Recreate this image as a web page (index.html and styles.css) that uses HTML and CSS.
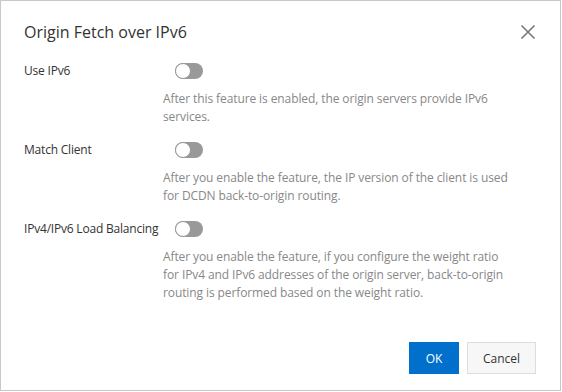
FILE: index.html
```html
<!DOCTYPE html>
<html>
<head>
<meta charset="utf-8">
<link rel="stylesheet" href="styles.css">
</head>
<body>
<div class="dialog">
  <div class="header">
    <div class="title">Origin Fetch over IPv6</div>
    <svg class="close" width="16" height="16" viewBox="0 0 16 16"><path d="M1.5 1.5L14.5 14.5M14.5 1.5L1.5 14.5" stroke="#777" stroke-width="1.6" fill="none"/></svg>
  </div>
  <div class="rows">
    <div class="row">
      <div class="label">Use IPv6</div>
      <div class="field">
        <div class="switch"><span class="knob"></span></div>
        <div class="desc">After this feature is enabled, the origin servers provide IPv6 services.</div>
      </div>
    </div>
    <div class="row">
      <div class="label">Match Client</div>
      <div class="field">
        <div class="switch"><span class="knob"></span></div>
        <div class="desc">After you enable the feature, the IP version of the client is used for DCDN back-to-origin routing.</div>
      </div>
    </div>
    <div class="row">
      <div class="label">IPv4/IPv6 Load Balancing</div>
      <div class="field">
        <div class="switch"><span class="knob"></span></div>
        <div class="desc">After you enable the feature, if you configure the weight ratio for IPv4 and IPv6 addresses of the origin server, back-to-origin routing is performed based on the weight ratio.</div>
      </div>
    </div>
  </div>
  <div class="footer">
    <button class="btn primary">OK</button>
    <button class="btn">Cancel</button>
  </div>
</div>
</body>
</html>
```
FILE: styles.css
```css
html, body { margin: 0; padding: 0; }
body {
  width: 562px; height: 392px;
  background: #fff;
  font-family: "Open Sans", "Noto Sans", sans-serif;
  color: #333;
}
.dialog {
  box-sizing: border-box;
  width: 561px; height: 391px;
  border: 1px solid #c8c8c8;
  background: #fff;
  display: flex; flex-direction: column;
  padding: 0 24px 0 23px;
}
.header {
  display: flex; justify-content: space-between; align-items: center;
  height: 61px;
}
.title { font-size: 16px; color: #333; }
.rows { display: flex; flex-direction: column; gap: 15px; }
.row { display: grid; grid-template-columns: 139px 1fr; }
.label { font-size: 12px; line-height: 18px; white-space: nowrap; letter-spacing: -0.2px; }
.field { display: flex; flex-direction: column; }
.switch {
  box-sizing: border-box;
  margin-left: 12px;
  width: 28px; height: 16px; border-radius: 8px;
  background: #999;
  position: relative;
  margin-top: 1px;
}
.knob {
  position: absolute; left: 0; top: 0;
  box-sizing: border-box;
  width: 16px; height: 16px; border-radius: 50%;
  background: #fff; border: 1px solid #999;
}
.desc {
  margin-top: 11px;
  font-size: 12px; line-height: 18px; color: #888;
  width: 352px;
  letter-spacing: -0.1px;
}
.footer {
  margin-top: auto;
  display: flex; justify-content: flex-end; gap: 8px;
  padding-bottom: 16px;
}
.btn {
  font-family: inherit;
  height: 32px; width: 69px; padding: 0;
  font-size: 12px;
  border: 1px solid #ddd; background: #f7f7f7; color: #333;
}
.btn.primary { background: #0070cc; border-color: #0070cc; color: #fff; width: 50px; }
```
